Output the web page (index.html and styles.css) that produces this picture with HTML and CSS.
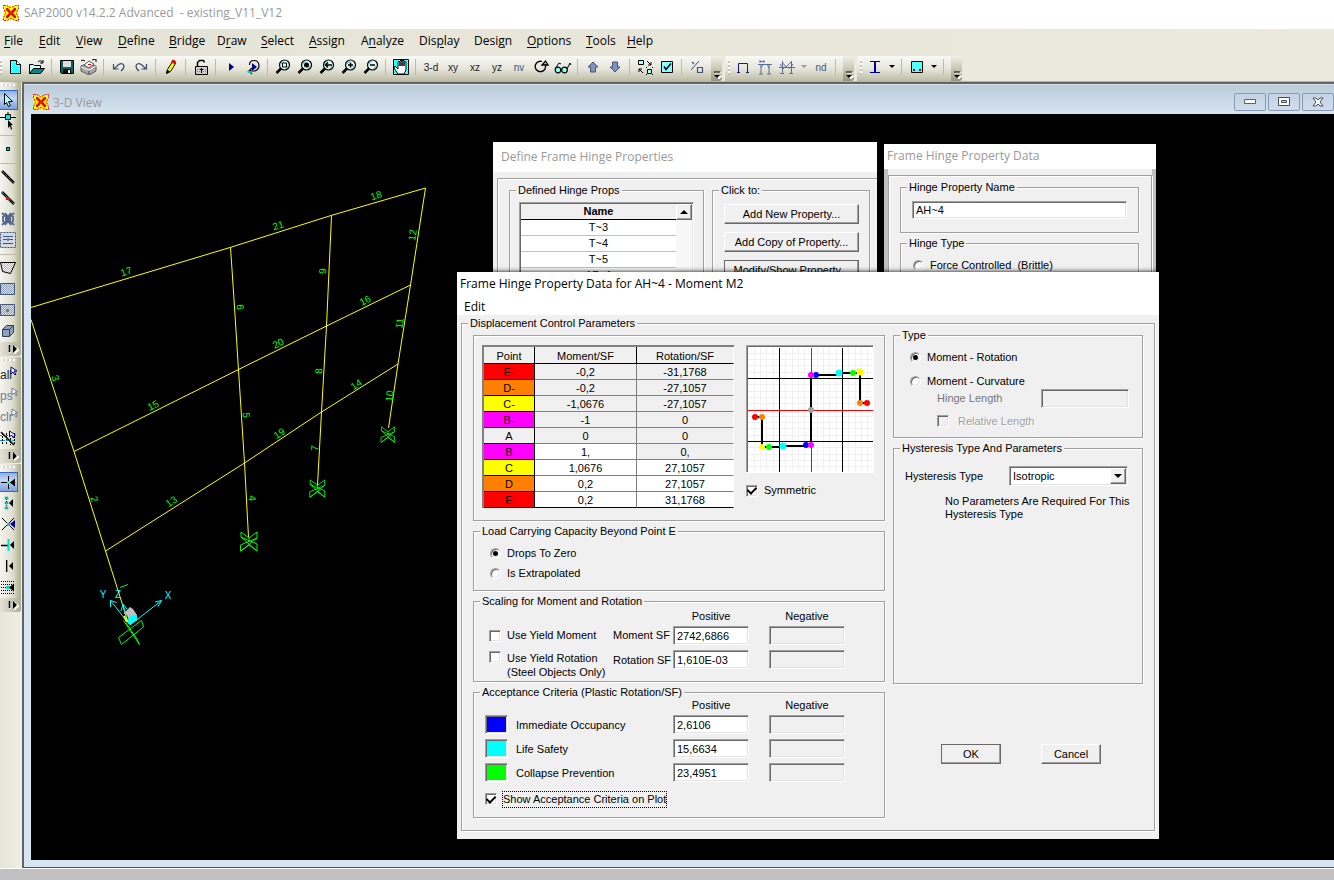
FILE: index.html
```html
<!DOCTYPE html>
<html lang="en">
<head>
<meta charset="utf-8">
<title>SAP2000 v14.2.2 Advanced - existing_V11_V12</title>
<link rel="stylesheet" href="styles.css">
</head>
<body>
<svg class="defs" width="0" height="0" aria-hidden="true">
  <defs>
    <pattern id="dots" width="2" height="2" patternUnits="userSpaceOnUse"><rect width="2" height="2" fill="#fff"/><path d="M0 0h1v1H0zM1 1h1v1H1z" fill="#0ff"/></pattern>
    <pattern id="haze" width="2" height="2" patternUnits="userSpaceOnUse"><rect width="2" height="2" fill="#dde1e6"/><path d="M0 0h1v1H0zM1 1h1v1H1z" fill="#8fa0bb"/></pattern>
    <symbol id="logo" viewBox="0 0 16 16"><path d="M1 1h14v14H1z" fill="#ff0"/><path d="M.5.500h3l4 2 1 0 4-2h3v3l-2 4v1l2 4v3h-3l-4-2H8l-4 2H.5v-3l2-4v-1l-2-4z" fill="none" stroke="#e00" stroke-dasharray="2 1"/><path d="M3 3h2l3 3.500L11 3h2v2l-3 3 3 3v2h-2L8 9.500 5 13H3v-2l3-3-3-3z" fill="#e00"/><path d="M7 7h2v2H7z" fill="#a40"/></symbol>
    <symbol id="lens" viewBox="0 0 16 16"><path d="M6 9.500L1.500 14" stroke="#000" stroke-width="2.500"/><circle cx="9.500" cy="6" r="5" fill="#f2f6f0" stroke="#000" stroke-width="1.200"/><path d="M5.700 5.500a4 4 0 0 1 3-3M13.300 6.500a4 4 0 0 1-3 3" stroke="#0dd" fill="none"/></symbol>
    <symbol id="ptr" viewBox="0 0 8 10"><path d="M1 1v7l2-2 2 3 1-1-2-3h3z" fill="#fff" stroke="currentColor" stroke-width="1"/></symbol>
    <symbol id="dn" viewBox="0 0 6 4"><path d="M0 0h6L3 3z"/></symbol>
    <symbol id="more" viewBox="0 0 10 8"><path d="M3 2h7M4 5h6L7 8z" stroke="#fff" fill="#fff"/><path d="M2 1h6" stroke="#000"/><path d="M2 4h6L5 7z"/></symbol>
    <symbol id="moreside" viewBox="0 0 12 10"><path d="M3 2v7M7 2v8l5-4z" stroke="#fff" fill="#fff"/><path d="M2.500 1v7" stroke="#000" stroke-width="1.500"/><path d="M6 1v8l4-4z"/></symbol>
    <symbol id="support" viewBox="-10 -11 20 22"><path d="M-8 -10L0 -4L8 -10V-4L-8.500 3V9L0 3L8 9V2L-8 -5zM-8 -5L8 9M8 -4L-8 9M0 -4V0" fill="none" stroke="#0f0"/></symbol>
  </defs>
</svg>

<header class="appbar"><svg width="16" height="16"><use href="#logo"/></svg><h1>SAP2000 v14.2.2 Advanced&nbsp; - existing_V11_V12</h1></header>

<nav class="menubar">
  <a href="#"><u>F</u>ile</a><a href="#"><u>E</u>dit</a><a href="#"><u>V</u>iew</a><a href="#"><u>D</u>efine</a><a href="#"><u>B</u>ridge</a><a href="#">D<u>r</u>aw</a><a href="#"><u>S</u>elect</a><a href="#"><u>A</u>ssign</a><a href="#">A<u>n</u>alyze</a><a href="#">Dis<u>p</u>lay</a><a href="#">Desi<u>g</u>n</a><a href="#"><u>O</u>ptions</a><a href="#"><u>T</u>ools</a><a href="#"><u>H</u>elp</a>
</nav>

<div class="toolbars">
  <div class="band">
    <i class="grip"></i>
    <button aria-label="New"><svg width="16" height="16"><path d="M3.500 1.500h6l4 4v9h-10z" fill="url(#dots)" stroke="#000"/><path d="M9.500 1.500v4h4" fill="#fff" stroke="#000"/></svg></button>
    <button aria-label="Open"><svg width="16" height="16"><path d="M.5 14.500v-9h4l1 1h6v3" fill="#cff" stroke="#000"/><path d="M.5 14.500l4-5h11l-4 5z" fill="#088" stroke="#000"/><path d="M9 3q3-3 5 1m0-3v3h-3" fill="none" stroke="#000"/></svg></button>
    <i class="sep"></i>
    <button aria-label="Save"><svg width="16" height="16"><path d="M1.500 1.500h13v13h-12l-1-1z" fill="#066" stroke="#000"/><path d="M4 2h8v6H4z" fill="#ddd"/><path d="M4 10h8v5H4z" fill="#000"/><path d="M9 11h2v3H9z" fill="#fff"/></svg></button>
    <button aria-label="Print"><svg width="18" height="16"><path d="M1 7l7-3 8 3v5l-7 4-8-4z" fill="#aaa" stroke="#555"/><path d="M4 6l5-4 5 3-5 4z" fill="#fff" stroke="#555"/><path d="M1 8l8 3 7-4" fill="none" stroke="#eee"/><path d="M1 2q2-2 4 0M12 1l4-1v3" fill="none" stroke="#000"/><path d="M8 5h3v1H8z" fill="#e00"/><path d="M9 12v3" stroke="#444"/></svg></button>
    <i class="sep"></i>
    <button aria-label="Undo"><svg width="14" height="14"><path d="M1.500 4v5h5M2 9l4-4q5-3 6 1 0 3-3 5" fill="none" stroke="#3c4a66" stroke-width="1.200"/></svg></button>
    <button aria-label="Redo"><svg width="14" height="14"><path d="M12.500 4v5h-5M12 9L8 5Q3 2 2 6q0 3 3 5" fill="none" stroke="#3c4a66" stroke-width="1.200"/></svg></button>
    <i class="sep"></i>
    <button aria-label="Refresh"><svg width="12" height="16"><path d="M1.500 14.500l1-4 5-8 3 2-5 8z" fill="#ff0" stroke="#000"/><path d="M7 1.500l3.500 2.500" stroke="#e00" stroke-width="3"/><path d="M1 15l1-4 3 1z"/></svg></button>
    <i class="sep"></i>
    <button aria-label="Lock"><svg width="16" height="16"><path d="M4.500 8V3.500l2-2h4l1 2" fill="none" stroke="#000" stroke-width="1.500"/><path d="M2.500 7.500h12v8h-12z" fill="#ccc" stroke="#000"/><path d="M4 10.500h9M4 12.500h9" stroke="#888" stroke-dasharray="1"/><path d="M8.500 9v5M7 10.500h3" stroke="#000"/></svg></button>
    <i class="sep"></i>
    <button aria-label="Run"><svg width="6" height="8"><path d="M1 0v8l5-4z" fill="#008"/></svg></button>
    <button aria-label="Animate"><svg width="16" height="16"><path d="M7 4v8l5-4z" fill="#008"/><path d="M4.500 6q0-4.500 4.500-4.500t5 5q0 4-4 5.500H4m3-3l-3 3 3 3" fill="none" stroke="#000" stroke-width="1.200"/><path d="M2 12h4v2H3z" fill="#0cc"/></svg></button>
    <i class="sep"></i>
    <button aria-label="Rubber band zoom"><svg width="16" height="16"><use href="#lens"/><path d="M7.500 4h4v4h-4z" fill="#dff" stroke="#000"/></svg></button>
    <button aria-label="Full view"><svg width="16" height="16"><use href="#lens"/><circle cx="9.500" cy="6" r="2.500"/></svg></button>
    <button aria-label="Previous zoom"><svg width="16" height="16"><use href="#lens"/><path d="M7 6h6M9 3.500L6.500 6 9 8.500" fill="none" stroke="#000" stroke-width="1.500"/></svg></button>
    <button aria-label="Zoom in"><svg width="16" height="16"><use href="#lens"/><path d="M7 6h5M9.500 3.500v5" stroke="#000" stroke-width="1.500"/></svg></button>
    <button aria-label="Zoom out"><svg width="16" height="16"><use href="#lens"/><path d="M7 6h5" stroke="#000" stroke-width="1.500"/></svg></button>
    <i class="sep"></i>
    <button aria-label="Pan"><svg width="16" height="16"><path d="M.5.500h15v15H.5z" fill="url(#dots)" stroke="#000"/><path d="M5 15l-4-6 1-2 3 3V3l1-1 1 1v4-5l1-1 1 1v5-5l1-1 1 1v5-4l1-1 1 1v8l-2 4z" fill="#fff" stroke="#000"/></svg></button>
    <i class="sep"></i>
    <button class="txt">3-d</button><button class="txt">xy</button><button class="txt">xz</button><button class="txt">yz</button><button class="txt dim">nv</button>
    <button aria-label="Rotate view"><svg width="16" height="16"><path d="M9 2.500a5.200 5.200 0 1 0 3.500 6V4M9 6l3.500-4L15 6z" fill="none" stroke="#000" stroke-width="1.300"/><path d="M11 5l1.500-2L14 5z" fill="#0dd"/></svg></button>
    <button aria-label="Perspective"><svg width="18" height="14"><circle cx="4" cy="10" r="2.800" fill="#8ff" stroke="#000" stroke-width="1.200"/><circle cx="10.500" cy="10" r="2.800" fill="#8ff" stroke="#000" stroke-width="1.200"/><path d="M1 9l4-6 2 1M13 9l3-6 1 2M7 10h1" fill="none" stroke="#000"/></svg></button>
    <i class="sep"></i>
    <button aria-label="Up"><svg width="12" height="12"><path d="M6 1l5 5H8.500v5h-5V6H1z" fill="#8093b8" stroke="#44557a"/></svg></button>
    <button aria-label="Down"><svg width="12" height="12"><path d="M6 11l5-5H8.500V1h-5v5H1z" fill="#8093b8" stroke="#44557a"/></svg></button>
    <i class="sep"></i>
    <button aria-label="Shrink objects"><svg width="16" height="16"><path d="M1.500 1.500h5v4h-5zM10.500 10.500h4v4h-4z" fill="#aff" stroke="#000"/><path d="M10 2l4 4m0-3v3h-3M6 14l-4-4m0 3v-3h3" fill="none" stroke="#000"/><path d="M9 8.500h1M15 8.500h1M9 15.500h1M15 15.500h1" stroke="#000"/></svg></button>
    <button aria-label="Display options"><svg width="14" height="14"><path d="M1.500 1.500h11v11h-11z" fill="#8ff" stroke="#000"/><path d="M4 6.500l2 3 5-6" fill="none" stroke="#000" stroke-width="1.500"/></svg></button>
    <i class="sep"></i>
    <button aria-label="Assign display"><svg width="14" height="14"><path d="M1 10L9 1" stroke="#44557a"/><path d="M2 2l2 2M7.500 7.500h5v5h-5z" fill="none" stroke="#44557a" stroke-width="1.200"/></svg></button>
    <button class="more" aria-label="More tools"><svg width="10" height="8"><use href="#more"/></svg></button>
  </div>
  <div class="band">
    <i class="grip wide"></i>
    <button aria-label="Frame"><svg width="16" height="14"><path d="M3.500 12V3.500h9V12M2 12.500h3M11 12.500h3" fill="none" stroke="#1a1a80"/></svg></button>
    <button aria-label="Loads"><svg width="16" height="16"><path d="M1 5.500h14M4 5v10M12 5v10M4 9l2-4M12 9l-2-4M3 1v3M7 1v3M3 2.500h4M2 15h4M10 15h4" fill="none" stroke="#5a6f98"/></svg></button>
    <button aria-label="Forces"><svg width="16" height="16"><path d="M0 8.500h16M3.500 2v12M12.500 2v12M3 3l4 5 5-5M1 5l4 5M10 10l4-5M1 14.500h4M10 14.500h4" fill="none" stroke="#5a6f98"/></svg></button>
    <button class="drop" aria-label="Forces menu"><svg width="6" height="4" fill="#999"><use href="#dn"/></svg></button>
    <button class="txt dim">nd</button>
    <i class="sep"></i>
    <button class="more" aria-label="More tools"><svg width="10" height="8"><use href="#more"/></svg></button>
  </div>
  <div class="band">
    <i class="grip wide"></i>
    <button aria-label="Steel design"><svg width="12" height="14"><path d="M1 1.500h10M1 12.500h10" stroke="#000090"/><path d="M6 1v12" stroke="#000090" stroke-width="2"/></svg></button>
    <button class="drop" aria-label="Steel menu"><svg width="6" height="4"><use href="#dn"/></svg></button>
    <i class="sep"></i>
    <button aria-label="Concrete design"><svg width="14" height="14"><path d="M1.500 1.500h11v11h-11z" fill="#5ff" stroke="#000"/><path d="M3 9h2v2H3zM9 9h2v2H9z" fill="#a00"/></svg></button>
    <button class="drop" aria-label="Concrete menu"><svg width="6" height="4"><use href="#dn"/></svg></button>
    <i class="sep"></i>
    <button class="more" aria-label="More tools"><svg width="10" height="8"><use href="#more"/></svg></button>
  </div>
</div>

<main class="work">
  <aside class="side">
    <div class="vband">
      <i class="vgrip"></i>
      <button class="on" aria-label="Pointer"><svg width="14" height="16"><path d="M3.500 1.500v11l2-2 2 4 2-1-2-4h4z" fill="#aff" stroke="#000"/></svg></button>
      <button aria-label="Reshape"><svg width="16" height="18"><path d="M0 5.500h16M8 0v8" stroke="#000"/><path d="M5.500 2.500h5v5h-5z" fill="#0ee" stroke="#000"/><path d="M8 8v8l2-2 1 4 1-1-1-4h2z"/></svg></button>
      <i class="vsep"></i>
      <button aria-label="Joint"><svg width="4" height="4"><path d="M.5.500h3v3h-3z" fill="#0cc" stroke="#000"/></svg></button>
      <i class="vsep"></i>
      <button aria-label="Frame"><svg width="14" height="14"><path d="M1 1l12 12" stroke="#000" stroke-width="2.500"/><path d="M1 1l12 12" stroke="#5ee" stroke-width="0.800" stroke-dasharray="1 1"/></svg></button>
      <button aria-label="Quick frame"><svg width="14" height="14"><path d="M1 1l12 12" stroke="#000" stroke-width="2.500"/><path d="M1 1l12 12" stroke="#5ee" stroke-width="0.800" stroke-dasharray="1 1"/><path d="M5 6h3v3H5z" fill="#f00"/></svg></button>
      <button aria-label="Braces"><svg width="14" height="14"><path d="M1 1l12 12M13 1L1 13M4 1l3 4 3-4M4 13l3-4 3 4M2 4v6M12 4v6M4 7h6" fill="none" stroke="#53658c" stroke-width="1.800"/></svg></button>
      <button aria-label="Secondary beams"><svg width="16" height="16"><path d="M.5.500h15v15H.5z" fill="#d5dae2" stroke="#44557a" stroke-dasharray="2 1"/><path d="M3 4.500h10M3 7.500h10M3 11.500h10" stroke="#44557a"/><path d="M7 6h2v3H7z" fill="#5a8fc8"/></svg></button>
      <i class="vsep"></i>
      <button aria-label="Poly area"><svg width="16" height="14"><path d="M.5 1.500h15l-5 11-8-2z" fill="url(#dots)" stroke="#000"/></svg></button>
      <button aria-label="Rectangular area"><svg width="16" height="14"><path d="M.5 1.500h14v11H.5z" fill="url(#haze)" stroke="#44557a"/></svg></button>
      <button aria-label="Quick area"><svg width="16" height="14"><path d="M.5 1.500h14v11H.5z" fill="url(#haze)" stroke="#44557a"/><path d="M6 6h3v3H6z" fill="#667da8"/></svg></button>
      <button aria-label="Solid"><svg width="14" height="14"><path d="M1.500 5.500l4-4h7v7l-4 4h-7z" fill="#8fa0bb" stroke="#333f5c"/><path d="M1.500 5.500h7v7M8.500 5.500l4-4" fill="none" stroke="#333f5c"/></svg></button>
      <button class="vmore" aria-label="More tools"><svg width="12" height="10"><use href="#moreside"/></svg></button>
    </div>
    <div class="vband">
      <i class="vgrip"></i>
      <button class="sel">all<svg width="8" height="10" class="c-navy"><use href="#ptr"/></svg></button>
      <button class="sel dim">ps<svg width="8" height="10"><use href="#ptr"/></svg></button>
      <button class="sel dim">clr<svg width="8" height="10"><use href="#ptr"/></svg></button>
      <button aria-label="Intersecting line"><svg width="16" height="16"><path d="M2.500 3v12M6.500 3v12M10.500 8v7M14.500 3v12" stroke="#000" stroke-dasharray="2 1"/><path d="M0 5.500h9M0 10.500h14" stroke="#0aa" stroke-dasharray="2 1"/><path d="M1 2l13 13" stroke="#000" stroke-width="1.500"/><path d="M9.500 1v6l2-2 2 3 1-3h1z" fill="#fff" stroke="#008"/></svg></button>
      <button class="vmore" aria-label="More tools"><svg width="12" height="10"><use href="#moreside"/></svg></button>
    </div>
    <div class="vband">
      <i class="vgrip"></i>
      <button class="on" aria-label="Snap to points"><svg width="16" height="14"><path d="M1 7.500h12M8.500 1v13" stroke="#000"/><path d="M7 6h3v3H7z" fill="#0ff"/><path d="M10 7.500l5-4v8z"/></svg></button>
      <button aria-label="Snap to ends"><svg width="14" height="14"><path d="M5.500 1v12" stroke="#000" stroke-dasharray="1"/><path d="M4 1h3v2H4zM4 6h3v2H4zM4 11h3v2H4z" fill="#0dd" stroke="#088" stroke-width=".5"/><path d="M8 7l4-4v8z"/></svg></button>
      <button aria-label="Snap to intersections"><svg width="14" height="14"><path d="M1 1l12 12M13 1L1 13" stroke="#000"/><path d="M6 6h3v3H6z" fill="#0cc"/><path d="M9 7l5-4v8z" fill="#008"/></svg></button>
      <button aria-label="Snap perpendicular"><svg width="14" height="14"><path d="M0 7.500h7" stroke="#000" stroke-width="1.500"/><path d="M7.500 1v12" stroke="#0dd" stroke-width="2"/><path d="M9 7l4-4v8z"/></svg></button>
      <button aria-label="Snap to lines"><svg width="14" height="14"><path d="M5.500 1v12" stroke="#000"/><path d="M6.500 1v12" stroke="#0dd"/><path d="M8 7l4-4v8z"/></svg></button>
      <button aria-label="Snap to grid"><svg width="16" height="14"><path d="M1 1.500h14M1 4.500h14M1 7.500h14M1 10.500h14M1 13.500h14" stroke="#000" stroke-dasharray="1 1"/><circle cx="8" cy="7.500" r="2" fill="#0dd"/><path d="M9 7.500l5-4v8z"/></svg></button>
      <button class="vmore" aria-label="More tools"><svg width="12" height="10"><use href="#moreside"/></svg></button>
    </div>
  </aside>

  <section class="mdi">
    <div class="mdibar">
      <svg width="16" height="16"><use href="#logo"/></svg><h2>3-D View</h2>
      <button aria-label="Minimize"><svg width="12" height="6"><path d="M.5.500h11v4H.5z" fill="#fff" stroke="#556078"/></svg></button>
      <button aria-label="Maximize"><svg width="12" height="10"><path d="M.5.500h11v8H.5z" fill="#fff" stroke="#444c60" /><path d="M3.500 3.500h5v2h-5z" fill="#c5d2e2" stroke="#444c60"/></svg></button>
      <button aria-label="Close"><svg width="12" height="10"><path d="M1 1h3l2 2 2-2h3L8 5l3 4H8L6 7 4 9H1l3-4z" fill="#fff" stroke="#444c60"/></svg></button>
    </div>
    <div class="canvas">
      <svg class="model" width="420" height="560" viewBox="31 114 420 560">
        <g fill="none" stroke="#ff0">
          <path d="M31 307.500L230 247.500L331 215.500L425.500 188L410.500 285L398 364L388.500 428"/>
          <path d="M31 319.500L74 451.500L105.500 551L128 622"/>
          <path d="M74 451.500L238.500 369.500L326.500 326L410.500 285"/>
          <path d="M105.500 551L244.500 463L321.500 412L398 364"/>
          <path d="M230.500 247L234.500 307L238.500 370L244.500 463L248.500 537M331.500 216L326.500 326L321.500 412L317.500 485"/>
        </g>
        <use href="#support" x="239" y="531" width="20" height="22"/>
        <use href="#support" x="308" y="479" width="19" height="20"/>
        <use href="#support" x="379" y="426" width="18" height="18"/>
        <g class="ids">
          <text transform="translate(126 271) rotate(-17)" y="4">17</text><text transform="translate(278 225) rotate(-17)" y="4">21</text><text transform="translate(376 195) rotate(-17)" y="4">18</text>
          <text transform="translate(153 405) rotate(-27)" y="4">15</text><text transform="translate(278 343) rotate(-27)" y="4">20</text><text transform="translate(365 300) rotate(-27)" y="4">16</text>
          <text transform="translate(171 501) rotate(-33)" y="4">13</text><text transform="translate(279 433) rotate(-33)" y="4">19</text><text transform="translate(356 384) rotate(-33)" y="4">14</text>
          <text transform="translate(56 378) rotate(72)" y="4">3</text><text transform="translate(95 499) rotate(72)" y="4">2</text>
          <text transform="translate(241 307) rotate(87)" y="4">6</text><text transform="translate(247 415) rotate(87)" y="4">5</text><text transform="translate(253 498) rotate(87)" y="4">4</text>
          <text transform="translate(322 271) rotate(-88)" y="4">9</text><text transform="translate(318 371) rotate(-88)" y="4">8</text><text transform="translate(314 448) rotate(-88)" y="4">7</text>
          <text transform="translate(412 235) rotate(-82)" y="4">12</text><text transform="translate(399 323) rotate(-82)" y="4">11</text><text transform="translate(389 396) rotate(-82)" y="4">10</text>
        </g>
        <path d="M120 587.500l8-3M118.500 637.500L141.500 620.500L143.500 627L121.500 644.500zM123.500 620.500L139.500 644.500L137 639L126 623" fill="none" stroke="#0f0"/>
        <path d="M129 624L110.500 600.500M110.500 607v-6.500l6 2M134 622L161.500 600.500M155 602l6.500-1.500-3.500 6M127 620L123 604M121 611l2-7 4 5" fill="none" stroke="#0ff"/>
        <path d="M123.500 613.500l6.500-6.500 3 2 4 6-8 6-2-6z" fill="#c0c0c0"/><path d="M137 615v5l-7 5.500-3-4 4-6z" fill="#0ff"/><path d="M124 616l3 6" stroke="#ff0" stroke-width="2"/>
        <g class="axes"><text x="103" y="598">Y</text><text x="118" y="598">Z</text><text x="168" y="599">X</text></g>
      </svg>

      <section class="win define">
        <h3>Define Frame Hinge Properties</h3>
        <div class="etched defbody">
          <fieldset class="props"><legend>Defined Hinge Props</legend>
            <div class="list">
              <table class="names"><tr><th>Name</th></tr><tr><td>T~3</td></tr><tr><td>T~4</td></tr><tr><td>T~5</td></tr><tr><td>AP~1</td></tr></table>
              <div class="scroll"><button class="push" aria-label="Scroll up"><svg width="8" height="4"><path d="M0 4h8L4 0z"/></svg></button></div>
            </div>
          </fieldset>
          <fieldset class="click"><legend>Click to:</legend>
            <button class="push">Add New Property...</button>
            <button class="push">Add Copy of Property...</button>
            <button class="push default">Modify/Show Property...</button>
          </fieldset>
        </div>
      </section>

      <section class="win hinge">
        <h3>Frame Hinge Property Data</h3>
        <div class="hingein"><div class="etched hingebody">
          <fieldset><legend>Hinge Property Name</legend><input class="field" type="text" value="AH~4" aria-label="Hinge Property Name"></fieldset>
          <fieldset class="htype"><legend>Hinge Type</legend><label class="opt"><input type="radio" name="htype"><span>Force Controlled&nbsp; (Brittle)</span></label></fieldset>
        </div></div>
      </section>

      <section class="win main">
        <h3>Frame Hinge Property Data for AH~4 - Moment M2</h3>
        <nav class="winmenu"><a href="#">Edit</a></nav>
        <fieldset class="outer"><legend>Displacement Control Parameters</legend>
          <div class="left">
            <div class="etched curve">
              <table class="pts">
                <tr><th>Point</th><th>Moment/SF</th><th>Rotation/SF</th></tr>
                <tr><td class="red">E-</td><td>-0,2</td><td>-31,1768</td></tr>
                <tr><td class="orange">D-</td><td>-0,2</td><td>-27,1057</td></tr>
                <tr><td class="yellow">C-</td><td>-1,0676</td><td>-27,1057</td></tr>
                <tr><td class="magenta">B-</td><td>-1</td><td>0</td></tr>
                <tr><td>A</td><td>0</td><td>0</td></tr>
                <tr><td class="magenta">B</td><td class="edit">1,</td><td>0,</td></tr>
                <tr><td class="yellow">C</td><td class="edit">1,0676</td><td class="edit">27,1057</td></tr>
                <tr><td class="orange">D</td><td class="edit">0,2</td><td class="edit">27,1057</td></tr>
                <tr><td class="red">E</td><td class="edit">0,2</td><td class="edit">31,1768</td></tr>
              </table>
              <div class="plotcol">
                <svg class="plot" width="128" height="128">
                  <path d="M0 0h128v128H0z" fill="#fff"/>
                  <path d="M8.500 2v124M14.500 2v124M20.500 2v124M27.500 2v124M39.500 2v124M46.500 2v124M52.500 2v124M58.500 2v124M71.500 2v124M77.500 2v124M83.500 2v124M90.500 2v124M102.500 2v124M109.500 2v124M115.500 2v124M121.500 2v124M2 8.500h124M2 14.500h124M2 20.500h124M2 27.500h124M2 39.500h124M2 46.500h124M2 52.500h124M2 58.500h124M2 71.500h124M2 77.500h124M2 83.500h124M2 90.500h124M2 102.500h124M2 109.500h124M2 115.500h124M2 121.500h124" stroke="#f0f0f0"/>
                  <path d="M33.500 3v124M96.500 3v124M2 33.500h125M2 96.500h125" stroke="#000"/>
                  <path d="M65.500 3v124M2 65.500h125" stroke="#f00"/>
                  <path d="M9 72h7v30h21v-1h23v-1h5V30h28v-2h21v30h7" fill="none" stroke="#000" stroke-width="2"/>
                  <circle cx="9" cy="72" r="3" fill="red"/><circle cx="16" cy="72" r="3" fill="#ff8000"/><circle cx="16" cy="102" r="3" fill="#ff0"/><circle cx="23" cy="102" r="3" fill="#0f0"/><circle cx="37" cy="101" r="3.500" fill="#0ff"/><circle cx="60" cy="100" r="3" fill="#00f"/><circle cx="65" cy="100" r="3" fill="#f0f"/><circle cx="65" cy="65" r="3" fill="#a0a0a0"/><circle cx="70" cy="30" r="3" fill="#00f"/><circle cx="65" cy="30" r="3" fill="#f0f"/><circle cx="93" cy="28" r="3.500" fill="#0ff"/><circle cx="107" cy="28" r="3" fill="#0f0"/><circle cx="114" cy="27" r="3.500" fill="#ff0"/><circle cx="114" cy="58" r="3" fill="#ff8000"/><circle cx="121" cy="58" r="3" fill="red"/>
                  <path d="M0 127.500h127.500V0" fill="none" stroke="#fff"/><path d="M0 127V.500h127M.5 127V0" fill="none" stroke="#a0a0a0"/><path d="M1.500 127V1.500H127" fill="none" stroke="#696969"/>
                </svg>
                <label class="opt"><input type="checkbox" checked><span>Symmetric</span></label>
              </div>
            </div>
            <fieldset class="load"><legend>Load Carrying Capacity Beyond Point E</legend>
              <label class="opt"><input type="radio" name="load" checked><span>Drops To Zero</span></label>
              <label class="opt"><input type="radio" name="load"><span>Is Extrapolated</span></label>
            </fieldset>
            <fieldset class="scaling"><legend>Scaling for Moment and Rotation</legend>
              <span class="head pos">Positive</span><span class="head">Negative</span>
              <label class="opt"><input type="checkbox"><span>Use Yield Moment</span></label><label for="msf">Moment SF</label><input class="field" id="msf" type="text" value="2742,6866"><input class="field neg" type="text" aria-label="Moment SF negative" disabled>
              <label class="opt two"><input type="checkbox"><span>Use Yield Rotation<br>(Steel Objects Only)</span></label><label for="rsf">Rotation SF</label><input class="field" id="rsf" type="text" value="1,610E-03"><input class="field neg" type="text" aria-label="Rotation SF negative" disabled>
            </fieldset>
            <fieldset class="accept"><legend>Acceptance Criteria (Plastic Rotation/SF)</legend>
              <span class="head pos">Positive</span><span class="head">Negative</span>
              <button class="swatch blue" aria-label="Immediate Occupancy colour"></button><label for="io">Immediate Occupancy</label><input class="field" id="io" type="text" value="2,6106"><input class="field neg" type="text" aria-label="Immediate Occupancy negative" disabled>
              <button class="swatch cyan" aria-label="Life Safety colour"></button><label for="ls">Life Safety</label><input class="field" id="ls" type="text" value="15,6634"><input class="field neg" type="text" aria-label="Life Safety negative" disabled>
              <button class="swatch green" aria-label="Collapse Prevention colour"></button><label for="cp">Collapse Prevention</label><input class="field" id="cp" type="text" value="23,4951"><input class="field neg" type="text" aria-label="Collapse Prevention negative" disabled>
              <label class="opt show"><input type="checkbox" checked><span>Show Acceptance Criteria on Plot</span></label>
            </fieldset>
          </div>
          <div class="right">
            <fieldset class="type"><legend>Type</legend>
              <label class="opt"><input type="radio" name="type" checked><span>Moment - Rotation</span></label>
              <label class="opt"><input type="radio" name="type"><span>Moment - Curvature</span></label>
              <div class="len"><label for="hl">Hinge Length</label><input class="field neg" id="hl" type="text" disabled></div>
              <label class="opt rel"><input type="checkbox" disabled><span>Relative Length</span></label>
            </fieldset>
            <fieldset class="hyst"><legend>Hysteresis Type And Parameters</legend>
              <div class="hrow"><label for="ht">Hysteresis Type</label><span class="combo"><select id="ht"><option>Isotropic</option></select><i class="push"><svg width="8" height="4"><path d="M0 0h8L4 4z"/></svg></i></span></div>
              <p>No Parameters Are Required For This<br>Hysteresis Type</p>
            </fieldset>
            <div class="actions"><button class="push default">OK</button><button class="push">Cancel</button></div>
          </div>
        </fieldset>
      </section>
    </div>
  </section>
</main>
<footer class="status"></footer>
</body>
</html>
```
FILE: styles.css
```css
* { box-sizing: border-box; }
body { margin: 0; min-height: 100vh; display: flex; flex-direction: column; background: #ebe9dd; color: #000; font: 11px/13px "Liberation Sans", Arial, sans-serif; overflow: hidden; }
h1, h2, h3, p { margin: 0; font-weight: 400; }
button, input, select { font: inherit; color: inherit; margin: 0; padding: 0; border: 0; }
button { background: none; display: flex; align-items: center; justify-content: center; }
a { color: inherit; text-decoration: none; }
svg { display: block; flex: none; }
i { font-style: normal; flex: none; }
.defs { position: absolute; }

.appbar, .menubar, .mdibar, .win h3, .winmenu { font-family: "Open Sans", "Noto Sans", sans-serif; font-size: 12px; line-height: 16px; white-space: pre; }
.appbar { height: 29px; padding: 0 3px 3px; display: flex; align-items: center; gap: 5px; background: #fff; color: #999; }
.appbar h1 { font-size: inherit; }
.menubar { height: 27px; padding: 0 0 3px 4px; display: grid; grid-template-columns: 35px 37px 42px 51px 48px 44px 48px 52px 58px 55px 53px 59px 41px auto; align-items: center; background: linear-gradient(90deg, #e4e4d6, #ebe9dd); }
.menubar u { text-underline-offset: 2px; }

.toolbars { height: 26px; display: flex; gap: 3px; background: #ebe9dd; border-bottom: 1px solid #b5b395; }
.band { display: flex; align-items: center; padding-bottom: 3px; background: linear-gradient(#f9f9f5, #e6e6dc 50%, #bdbda5); border-radius: 0 3px 3px 0; }
.band button { width: 22px; height: 22px; }
.band .drop { width: 12px; }
.band .more { width: 11px; height: 25px; margin: 0 0 -3px 3px; padding-bottom: 2px; align-items: flex-end; background: linear-gradient(#f0efe8, #c9c8b5 50%, #94937c); border-radius: 0 3px 3px 0; }
.txt, .sel { color: #222; font-size: 10px; }
.dim { color: #6b7a96; }
.txt.dim { color: #44557a; }
.grip { width: 4px; height: 16px; background: repeating-linear-gradient(#fff 0 2px, #c4c2b0 2px 4px) 0 0 / 2px 100% no-repeat; }
.grip.wide { width: 7px; background-position: 3px 0; }
.sep { width: 8px; height: 16px; background: linear-gradient(#bdbca9, #bdbca9) 3px 0 / 1px 100% no-repeat; }

.work { flex: 1; display: flex; min-height: 0; }
.side { width: 22px; flex: none; background: linear-gradient(90deg, #e6e6d8, #efeee4); }
.vband { width: 21px; margin-bottom: 1px; display: flex; flex-direction: column; background: linear-gradient(90deg, #f5f5f0, #deded0 60%, #adad8c); border-radius: 0 0 3px 3px; }
.vgrip { height: 8px; background: repeating-linear-gradient(90deg, #fff 0 2px, #d2d1c2 2px 4px) 1px 2px / 15px 2px no-repeat; }
.vband button { width: 18px; height: 21px; padding: 0 2px 1px 0; }
.vband .on { height: 20px; margin-bottom: 1px; padding: 0 1px 0 0; border: 1px solid #316ac5; border-left: 0; background: linear-gradient(#8fb0e0, #c3d6f3 40%, #7d9fdb); }
.vsep { height: 7px; background: linear-gradient(#bdbca9, #bdbca9) 0 3px / 17px 1px no-repeat; }
.vband .vmore { width: 21px; height: 14px; padding: 0 0 0 5px; background: linear-gradient(90deg, #e4e3d8, #b0af9a); border-radius: 0 0 3px 0; }
.vband .sel { justify-content: flex-start; font-size: 12px; padding: 0; }
.sel svg { margin: -10px 0 0 -2px; }
.c-navy { color: #000080; }

.mdi { flex: 1; min-width: 0; display: flex; flex-direction: column; border-left: 2px solid #646464; border-top: 2px solid #646464; border-bottom: 1px solid #505050; padding: 1px 0 7px 7px; background: #d7e4f2; }
.mdibar { height: 29px; flex: none; margin-left: -7px; padding: 5px 0 0 9px; display: flex; align-items: center; gap: 2px; background: linear-gradient(#bccbda, #d7e4f2); color: #999; }
.mdibar h2 { font-size: inherit; flex: 1; padding: 1px 0 0 2px; }
.mdibar button { width: 32px; height: 18px; border: 1px solid #8a9bb5; border-radius: 2px; background: linear-gradient(#c3d2e4, #cfdcec); }
.canvas { flex: 1; position: relative; overflow: hidden; background: #000; }
.ids text, .axes text { font: 10px "Liberation Sans", sans-serif; text-anchor: middle; fill: #0f0; }
.axes text { fill: #0ff; }
.status { height: 12px; background: #c0c0c0; border-top: 1px solid #fff; }

.win { position: absolute; background: #f0f0f0; white-space: nowrap; }
.win h3 { background: #fff; color: #999; }
.etched, fieldset { border: 1px solid #a0a0a0; box-shadow: 1px 1px 0 #fff, inset 1px 1px 0 #fff; }
fieldset { --inset: 11px; margin: 0; padding: 0 0 0 var(--inset); min-width: 0; }
legend { margin-left: calc(6px - var(--inset)); padding: 0 2px; background: #f0f0f0; }
.push { background: #f0f0f0; border: 1px solid; border-color: #fff #696969 #696969 #fff; box-shadow: inset -1px -1px 0 #a0a0a0; }
.field, .opt input, .combo, .list, .swatch { border: 1px solid; border-color: #a0a0a0 #fff #fff #a0a0a0; border-radius: 0; background: #fff; box-shadow: inset 1px 1px 0 #696969, inset -1px -1px 0 #e3e3e3; }
.field { height: 19px; width: 100%; padding: 0 3px; }
.field.neg { background: #f0f0f0; }
.opt { display: flex; align-items: center; gap: 6px; }
.opt input { appearance: none; width: 12px; height: 12px; flex: none; display: grid; place-content: center; }
.opt input[type="radio"] { width: 11px; height: 11px; border-radius: 50%; }
.opt input[type="radio"]:checked::before { content: ""; width: 5px; height: 5px; border-radius: 50%; background: #000; }
.opt input[type="checkbox"]:checked::before { content: ""; width: 4px; height: 7px; border: solid #000; border-width: 0 2px 2px 0; rotate: 45deg; margin-bottom: 2px; }
.opt input:disabled { background: #f0f0f0; }

.define { left: 462px; top: 28px; width: 384px; height: 130px; overflow: hidden; }
.define h3 { padding: 7px 8px; }
.defbody { margin: 6px 0 0 4px; height: 250px; padding: 5px 7px 0 11px; display: flex; gap: 8px; border-right: 0; }
.props { --inset: 9px; width: 195px; padding: 5px 9px; }
.list { display: flex; padding: 1px; height: 150px; }
.names { flex: 1; border-collapse: separate; border-spacing: 0; align-self: flex-start; background: #fff; text-align: center; }
.names th { height: 16px; padding: 0; background: #f0f0f0; border-bottom: 1px solid #000; }
.names td { height: 16px; padding: 0; border-bottom: 1px solid #c0c0c0; }
.scroll { width: 16px; background: #f7f7f7; }
.scroll .push { width: 16px; height: 16px; }
.click { flex: 1; padding: 7px 10px 0 11px; }
.click .push { width: 100%; height: 20px; margin-bottom: 8px; }
.push.default { border-color: #696969; }

.hinge { left: 853px; top: 30px; width: 272px; height: 128px; overflow: hidden; background: #c0c0c0; }
.hinge h3 { padding: 4px 3px 5px; }
.hingein { margin: 0 4px; padding-top: 6px; background: #f0f0f0; }
.hingebody { height: 260px; padding: 5px 12px 0 11px; }
.hingebody .field { height: 18px; }
.hingebody fieldset { padding: 7px 11px 13px; margin-bottom: 4px; }
.hingebody .htype { --inset: 12px; padding: 9px 12px; height: 120px; }

.main { left: 426px; top: 158px; width: 702px; padding-bottom: 8px; box-shadow: 0 0 5px #000; }
.main h3 { color: #000; padding: 4px 3px 3px; }
.winmenu { padding: 4px 7px 0; height: 20px; background: #fff; display: flex; align-items: center; }
.outer { margin: 2px 4px 0; padding: 0 11px 12px; display: grid; grid-template-columns: 412px 250px; justify-content: space-between; align-items: start; }
.left, .right { display: flex; flex-direction: column; gap: 4px; }
.left { padding-top: 5px; }
.right { margin-top: -1px; }
.curve { height: 186px; padding: 9px 10px 0 8px; display: flex; justify-content: space-between; }
.pts { width: 252px; table-layout: fixed; border-collapse: separate; border-spacing: 0; align-self: flex-start; text-align: center; border: solid #808080; border-width: 2px 0 0 2px; }
.pts th, .pts td { height: 16px; padding: 1px 0 0; border: solid #808080; border-width: 0 1px 1px 0; line-height: 14px; }
.pts th { height: 17px; font-weight: 400; border-color: #000; }
.pts th:nth-child(1) { width: 51px; }
.pts th:nth-child(2) { width: 102px; }
.pts td:first-child { border-color: #000; }
.pts tr:last-child td { border-bottom-color: #000; }
.pts th:last-child, .pts td:last-child { border-right-color: #fff; }
.red { background: #f00; }
.orange { background: #ff8000; }
.yellow { background: #ff0; }
.magenta { background: #f0f; }
.edit { background: #fff; }
.plotcol { display: flex; flex-direction: column; gap: 11px; }
.load { --inset: 16px; padding: 5px 16px 7px; }
.load .opt { height: 20px; }
.scaling { --inset: 15px; padding: 3px 15px; display: grid; grid-template-columns: 124px 60px 76px 76px; grid-template-rows: 10px 19px 28px; row-gap: 5px; align-items: center; }
.head { text-align: center; }
.pos { grid-column: 3; }
.scaling .head + label, .accept .head + button { grid-column: 1; }
.scaling .head:not(.pos), .scaling .neg, .accept .head:not(.pos), .accept .neg { margin-left: 20px; width: 76px; }
.scaling > .opt.two { align-items: flex-start; line-height: 14px; padding-top: 2px; }
.scaling > .two ~ * { align-self: start; }
.scaling > label[for="rsf"] { padding-top: 4px; }
.accept { padding: 1px 11px 12px; display: grid; grid-template-columns: 31px 157px 76px 76px; grid-template-rows: 10px 19px 19px 19px 18px; row-gap: 5px; align-items: center; }
.accept > label { padding-top: 2px; }
.swatch { width: 23px; height: 19px; }
.swatch.blue { background: #00f; }
.swatch.cyan { background: #0ff; }
.swatch.green { background: #0f0; }
.accept .show { grid-column: 1 / -1; margin-top: 4px; }
.show span { outline: 1px dotted #000; line-height: 15px; }
.type { --inset: 16px; padding: 5px 13px 6px 16px; }
.type .opt { height: 20px; margin-bottom: 4px; }
.type .len { display: flex; justify-content: space-between; align-items: center; padding-left: 27px; height: 18px; margin: -6px 0 4px; color: #777; }
.len .field { width: 88px; }
.type .rel { padding-left: 27px; gap: 9px; color: #a0a0a0; text-shadow: 1px 1px 0 #fff; margin: 0; }
.hyst { min-height: 242px; padding: 11px 14px 0 11px; }
.hrow { display: flex; align-items: center; justify-content: space-between; }
.combo { display: flex; width: 119px; height: 20px; padding: 1px; }
.combo select { appearance: none; flex: 1; min-width: 0; padding-left: 2px; background: #fff; border-radius: 0; }
.combo .push { width: 16px; display: grid; place-content: center; }
.hyst p { margin: 9px 0 0 40px; }
.actions { display: flex; gap: 40px; padding: 56px 0 0 48px; }
.actions .push { width: 60px; height: 20px; }
```
